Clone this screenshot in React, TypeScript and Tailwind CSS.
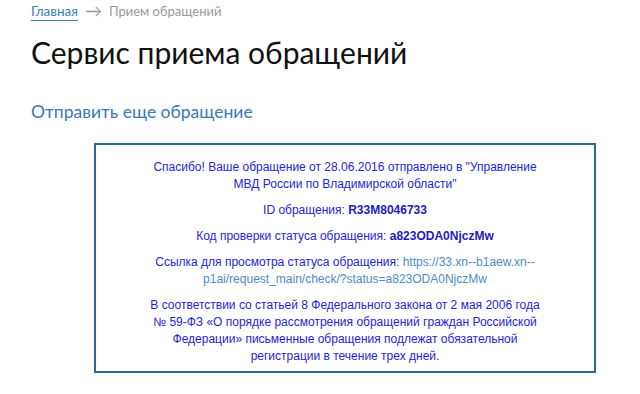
import React from "react";

const App: React.FC = () => {
  return (
    <div className="min-h-screen w-[640px] h-[394px] bg-white overflow-hidden" style={{ fontFamily: 'Lato, "Open Sans", sans-serif' }}>
      <div className="pl-[31px] pt-[2px]">
        <div className="flex items-center gap-[7px] text-[13.5px] leading-[18px]">
          <a className="text-[#3a80b0] underline underline-offset-[4px] decoration-[#3a80b0]">Главная</a>
          <span className="text-[#9a9a9a] text-[17px] leading-[18px]">→</span>
          <span className="text-[#9a9a9a] text-[13px]">Прием обращений</span>
        </div>
        <h1 className="mt-[14px] text-[30px] leading-[36px] text-[#111]">Сервис приема обращений</h1>
        <a className="block mt-[30px] text-[17.5px] leading-[24px] text-[#3a78b8]">Отправить еще обращение</a>
      </div>

      <div className="ml-[94px] mt-[19px] w-[502px] border-2 border-[#2b6c96] px-[40px] pt-[14px] pb-[6px] text-center text-[12px] leading-[17px] text-[#2424dc]" style={{ fontFamily: '"Liberation Sans", Arial, sans-serif' }}>
        <p className="mb-[9px]">
          Спасибо! Ваше обращение от 28.06.2016 отправлено в "Управление<br />МВД России по Владимирской области"
        </p>
        <p className="mb-[9px]">
          ID обращения: <b className="text-[#1c1cc4]">R33M8046733</b>
        </p>
        <p className="mb-[9px]">
          Код проверки статуса обращения: <b className="text-[#1c1cc4]">a823ODA0NjczMw</b>
        </p>
        <p className="mb-[9px]">
          Ссылка для просмотра статуса обращения:{" "}
          <a className="text-[#4a8ccc]">https://33.xn--b1aew.xn--<br />p1ai/request_main/check/?status=a823ODA0NjczMw</a>
        </p>
        <p>
          В соответствии со статьей 8 Федерального закона от 2 мая 2006 года<br />№ 59-ФЗ «О порядке рассмотрения обращений граждан Российской<br />Федерации» письменные обращения подлежат обязательной<br />регистрации в течение трех дней.
        </p>
      </div>
    </div>
  );
};

export default App;
